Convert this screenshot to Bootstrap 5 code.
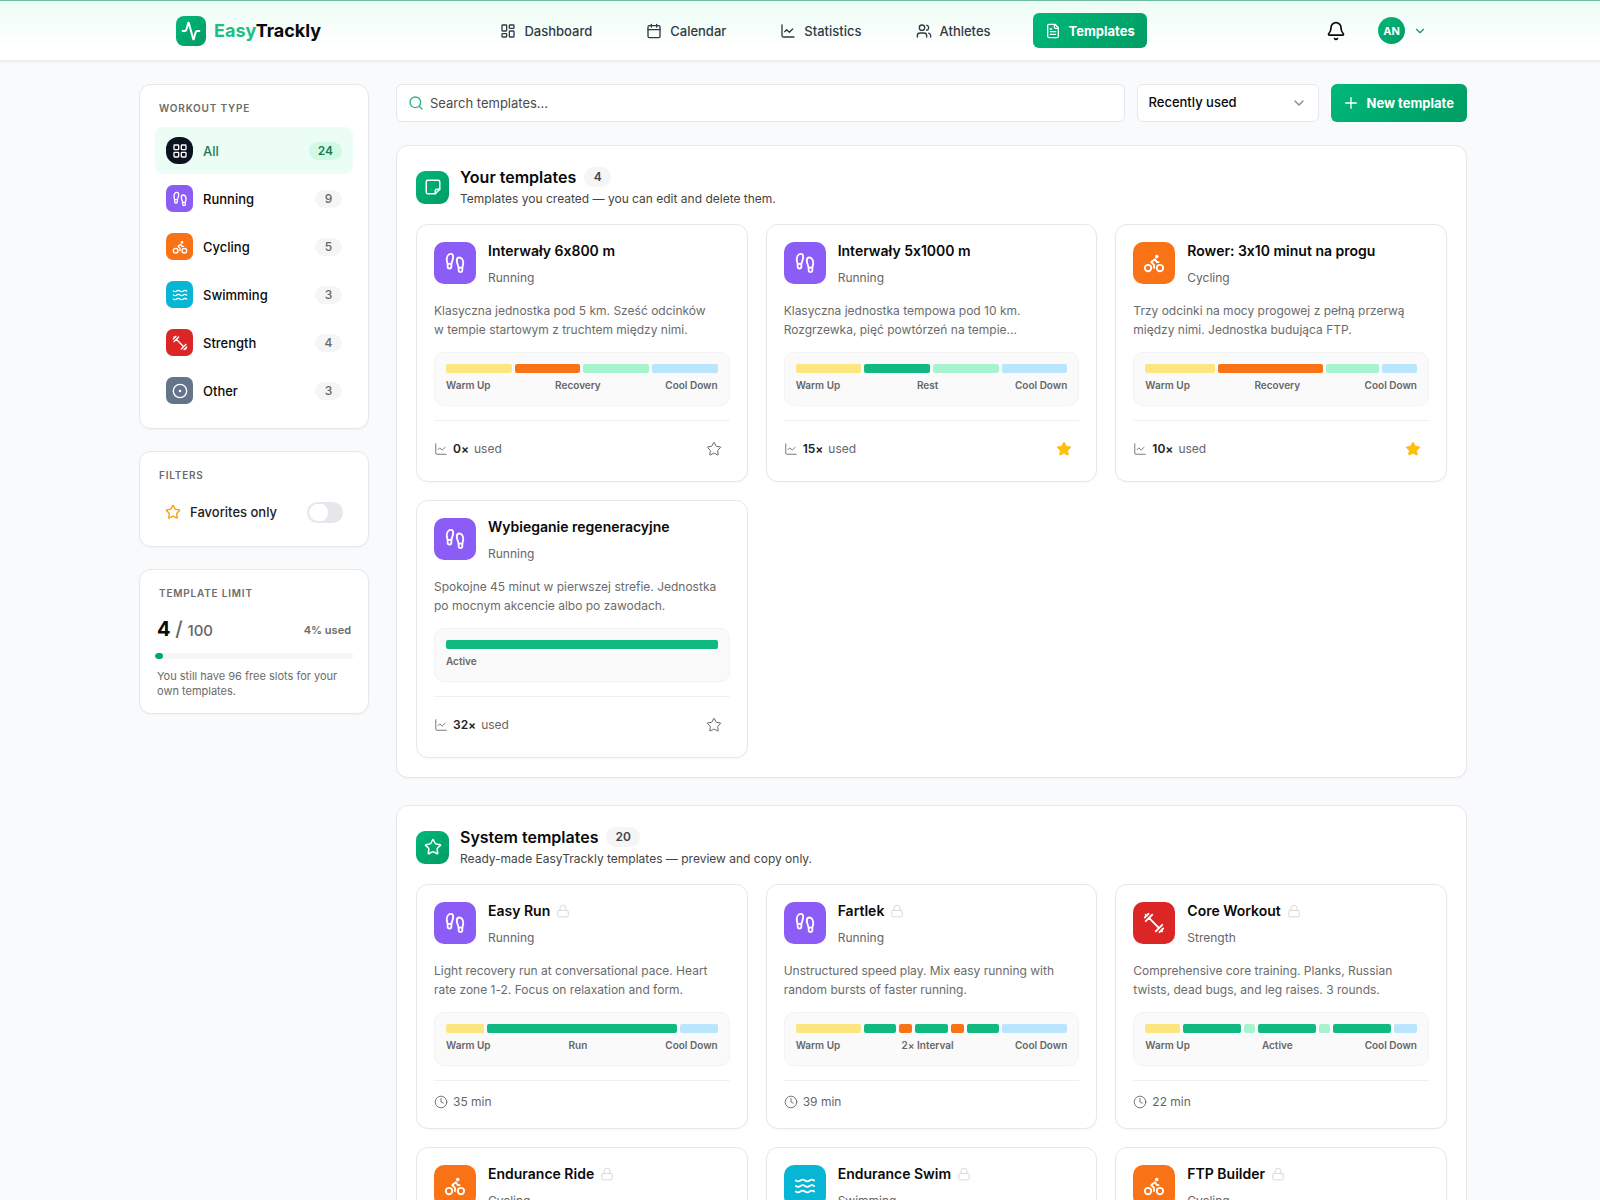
<!DOCTYPE html>
<html lang="en">
<head>
<meta charset="utf-8">
<meta name="viewport" content="width=device-width, initial-scale=1">
<title>EasyTrackly – Templates</title>
<link href="https://cdn.jsdelivr.net/npm/bootstrap@5.3.0/dist/css/bootstrap.min.css" rel="stylesheet">
<style>
  :root { --line: #e5e7eb; --green: #10b981; --ink: #0a0a0a; --muted: #6b6b6b; }
  body { font-family: Inter, "Liberation Sans", sans-serif; font-size: 13px; line-height: 20px; color: var(--ink); background: #f9fafb; font-feature-settings: "calt" 0; }
  svg.ico { width: 14px; height: 14px; fill: none; stroke: currentColor; stroke-width: 2; stroke-linecap: round; stroke-linejoin: round; flex: none; }
  svg.ico-16 { width: 16px; height: 16px; }
  svg.ico-18 { width: 18px; height: 18px; }
  svg.ico-20 { width: 20px; height: 20px; }
  .thin { stroke-width: 1.5 !important; }
  .green-fill { background: linear-gradient(135deg, #00b87a, #009c63); color: #fff; }

  .topbar { height: 61px; padding: 0; border-top: 1px solid #6fbf9f; border-bottom: 1px solid #e9eeec; background: linear-gradient(#ecfdf5, #fff 80%); box-shadow: 0 1px 3px rgba(0,0,0,.06); }
  .topbar-inner { max-width: 1272px; padding: 0 9px 0 12px; }
  .brand-mark { width: 30px; height: 30px; border-radius: 8px; }
  .brand-mark svg.ico { stroke-width: 2.4; }
  .brand-name { font-size: 18px; font-weight: 700; color: var(--ink); }
  .brand-name span { color: #1dbf83; }
  .main-nav { gap: 30px; }
  .main-nav .nav-link { display: flex; align-items: center; gap: 8px; height: 35px; padding: 0 12px; font-size: 13px; font-weight: 500; color: #2f3a44; border-radius: 6px; }
  .main-nav .nav-link.active { color: #fff; font-weight: 700; }
  .user-area { padding-left: 12px; gap: 32px; }
  .avatar { width: 27px; height: 27px; font-size: 11px; font-weight: 700; }
  .caret { color: #2c8a66; }
  .plain-btn { border: 0; background: none; padding: 0; color: var(--ink); }

  .page { max-width: 1334px; padding: 23px 0 30px 6px; gap: 27px; }
  .side { width: 230px; flex: none; display: flex; flex-direction: column; gap: 22px; }
  .panel { background: #fff; border: 1px solid var(--line); border-radius: 12px; box-shadow: 0 1px 2px rgba(0,0,0,.04); }
  .side .panel { padding: 14px 15px; }
  .side-title { font-size: 10px; line-height: 18px; font-weight: 600; letter-spacing: .08em; color: #6b6b6b; margin: 0; padding-left: 4px; text-transform: uppercase; }
  .types { margin-top: 10px; display: flex; flex-direction: column; gap: 1px; }
  .type-btn { display: flex; align-items: center; gap: 10px; width: 100%; height: 47px; padding: 0 11px; border: 0; background: none; border-radius: 8px; text-align: left; font-weight: 500; color: var(--ink); }
  .type-btn.active { background: #ecfdf5; color: #1b7a50; }
  .tile { width: 27px; height: 27px; border-radius: 7px; color: #fff; display: flex; align-items: center; justify-content: center; flex: none; }
  .t-all { background: #0b1220; border-radius: 12px; }
  .t-run { background: #8b5cf6; } .t-bike { background: #f97316; } .t-swim { background: #06b6d4; }
  .t-gym { background: #dc2626; } .t-other { background: #64748b; }
  .pill { min-width: 27px; padding: 0 9px; border-radius: 10px; background: #f5f5f5; color: #666; font-size: 12px; line-height: 18px; font-weight: 500; text-align: center; }
  .active .pill { background: #d1fae5; color: #1b7a50; font-weight: 600; }
  .fav-row { margin: 11px 0 3px; padding: 0 10px; height: 34px; gap: 9px; }
  .fav-star { color: #f59e0b; }
  .fav-row label { font-weight: 500; color: #222; }
  .fav-row .form-check-input { width: 36px; height: 21px; margin: 0; border: 2px solid #e5e7eb; background-color: #e5e7eb; background-size: 19px; --bs-form-switch-bg: url("data:image/svg+xml,%3csvg xmlns='http://www.w3.org/2000/svg' viewBox='-4 -4 8 8'%3e%3ccircle r='4' fill='%23fff'/%3e%3c/svg%3e"); }
  .limit-row { margin-top: 12px; padding: 0 2px; }
  .limit-num { font-size: 20px; line-height: 30px; font-weight: 700; }
  .limit-num span { font-weight: 500; color: #666; }
  .limit-num .limit-max { font-size: 15px; }
  .limit-bar { height: 6px; background: #f5f5f5; border-radius: 3px; margin-top: 7px; }
  .limit-bar .progress-bar { background: #00a86b; border-radius: 3px; }
  .note { font-size: 11px; line-height: 15px; color: #6b6b6b; }
  p.note { margin: 10px 0 0; padding: 0 2px; }

  .toolbar { gap: 12px; margin-bottom: 23px; }
  .tool { height: 38px; border: 1px solid var(--line); border-radius: 6px; background-color: #fff; font-size: 13px; }
  .search { display: flex; align-items: center; gap: 6px; padding: 0 11px; color: #2bb583; }
  .search input { border: 0; outline: 0; padding: 0; width: 100%; background: none; color: var(--ink); }
  .search input::placeholder { color: #4b4b4b; opacity: 1; }
  .sort { width: 182px; flex: none; font-weight: 500; color: var(--ink); padding: 0 34px 0 11px; background-image: url("data:image/svg+xml,%3csvg xmlns='http://www.w3.org/2000/svg' viewBox='0 0 24 24' fill='none' stroke='%23888' stroke-width='2' stroke-linecap='round' stroke-linejoin='round'%3e%3cpath d='m6 9 6 6 6-6'/%3e%3c/svg%3e"); background-position: right 11px center; background-size: 16px; }
  .new-btn { height: 38px; padding: 0 13px 0 12px; border: 0; border-radius: 6px; font-size: 13px; font-weight: 700; white-space: nowrap; display: flex; align-items: center; gap: 8px; }

  .block { padding: 19px; }
  .block + .block { margin-top: 27px; }
  .block-head { height: 44px; margin-bottom: 15px; display: flex; align-items: center; gap: 11px; }
  .block-icon { width: 33px; height: 33px; border-radius: 9px; display: flex; align-items: center; justify-content: center; }
  .block-head h2 { font-size: 16px; line-height: 24px; font-weight: 600; margin: 0; }
  .block-head p { font-size: 12px; line-height: 20px; margin: 0; color: #444; }
  .block-head .pill { line-height: 20px; font-weight: 600; color: #444; }
  .tpl-grid { display: grid; grid-template-columns: repeat(3, minmax(0, 1fr)); gap: 18px; }
  .tpl { background: #fff; border: 1px solid var(--line); border-radius: 12px; padding: 17px; box-shadow: 0 1px 2px rgba(0,0,0,.03); }
  .tpl-top { display: flex; gap: 12px; height: 42px; }
  .tpl-top .tile { width: 42px; height: 42px; border-radius: 10px; }
  .tpl-top .tile .ico { width: 22px; height: 22px; }
  .tpl h3 { font-size: 14px; line-height: 18px; font-weight: 600; margin: 0 0 9px; display: flex; align-items: center; gap: 6px; }
  .tpl h3 .ico { color: #d4d4d4; }
  .kind { font-size: 12px; line-height: 18px; color: #666; }
  .desc { font-size: 12px; line-height: 19px; min-height: 38px; margin: 17px 0 13px; color: #6b6b6b; }
  .plan { height: 54px; border: 1px solid #f3f3f3; border-radius: 10px; background: #fafafa; padding: 11px; }
  .segs { display: flex; gap: 3px; height: 9px; }
  .segs i { border-radius: 2px; min-width: 0; }
  .s-w { background: #fde680; } .s-o { background: #f97316; } .s-r { background: #a7f3d0; } .s-c { background: #bae6fd; } .s-g { background: #10b981; }
  .caps { display: flex; justify-content: space-between; font-size: 10px; line-height: 16px; margin-top: 4px; font-weight: 600; color: #666; }
  .tpl-foot { display: flex; align-items: center; gap: 5px; margin: 14px 0 -12px; border-top: 1px solid #f0f0f0; font-size: 12px; color: #666; }
  .own .tpl-foot { height: 57px; }
  .sys .tpl-foot { height: 43px; }
  .own .tpl { padding-bottom: 16px; }
  .tpl-foot b { color: #222; font-weight: 600; }
  .star-btn { width: 31px; height: 31px; color: #666; display: flex; align-items: center; justify-content: center; }
  .star-btn.on { color: #fbb724; } .star-btn.on .ico { fill: #ffc107; }
</style>
<script src="https://cdn.jsdelivr.net/npm/bootstrap@5.3.0/dist/js/bootstrap.bundle.min.js"></script>
</head>
<body>
<svg class="d-none" xmlns="http://www.w3.org/2000/svg">
  <symbol id="pulse" viewBox="0 0 24 24"><path d="M22 12h-2.48a2 2 0 0 0-1.93 1.46l-2.35 8.36a.25.25 0 0 1-.48 0L9.24 2.18a.25.25 0 0 0-.48 0l-2.35 8.36A2 2 0 0 1 4.49 12H2"/></symbol>
  <symbol id="dash" viewBox="0 0 24 24"><rect x="3" y="3" width="7" height="9" rx="1"/><rect x="14" y="3" width="7" height="5" rx="1"/><rect x="14" y="12" width="7" height="9" rx="1"/><rect x="3" y="16" width="7" height="5" rx="1"/></symbol>
  <symbol id="cal" viewBox="0 0 24 24"><path d="M8 2v4M16 2v4M3 10h18"/><rect x="3" y="4" width="18" height="18" rx="2"/></symbol>
  <symbol id="chart" viewBox="0 0 24 24"><path d="M3 3v16a2 2 0 0 0 2 2h16"/><path d="m19 9-5 5-4-4-3 3"/></symbol>
  <symbol id="users" viewBox="0 0 24 24"><path d="M16 21v-2a4 4 0 0 0-4-4H6a4 4 0 0 0-4 4v2"/><circle cx="9" cy="7" r="4"/><path d="M22 21v-2a4 4 0 0 0-3-3.87M16 3.13a4 4 0 0 1 0 7.75"/></symbol>
  <symbol id="file" viewBox="0 0 24 24"><path d="M15 2H6a2 2 0 0 0-2 2v16a2 2 0 0 0 2 2h12a2 2 0 0 0 2-2V7Z"/><path d="M14 2v4a2 2 0 0 0 2 2h4M10 9H8M16 13H8M16 17H8"/></symbol>
  <symbol id="bell" viewBox="0 0 24 24"><path d="M10.268 21a2 2 0 0 0 3.464 0"/><path d="M3.262 15.326A1 1 0 0 0 4 17h16a1 1 0 0 0 .74-1.673C19.41 13.956 18 12.499 18 8A6 6 0 0 0 6 8c0 4.499-1.411 5.956-2.738 7.326"/></symbol>
  <symbol id="down" viewBox="0 0 24 24"><path d="m6 9 6 6 6-6"/></symbol>
  <symbol id="find" viewBox="0 0 24 24"><circle cx="11" cy="11" r="8"/><path d="m21 21-4.3-4.3"/></symbol>
  <symbol id="plus" viewBox="0 0 24 24"><path d="M4 12h16M12 4v16"/></symbol>
  <symbol id="grid" viewBox="0 0 24 24"><rect x="3" y="3" width="7" height="7" rx="1"/><rect x="14" y="3" width="7" height="7" rx="1"/><rect x="14" y="14" width="7" height="7" rx="1"/><rect x="3" y="14" width="7" height="7" rx="1"/></symbol>
  <symbol id="run" viewBox="0 0 24 24"><path d="M4 16v-2.38C4 11.5 2.97 10.5 3 8c.03-2.72 1.49-6 4.5-6C9.37 2 10 3.8 10 5.5c0 3.11-2 5.66-2 8.68V16a2 2 0 1 1-4 0Z"/><path d="M20 20v-2.38c0-2.12 1.03-3.12 1-5.62-.03-2.72-1.49-6-4.5-6C14.63 6 14 7.8 14 9.5c0 3.11 2 5.66 2 8.68V20a2 2 0 1 0 4 0Z"/><path d="M16 17h4M4 13h4"/></symbol>
  <symbol id="bike" viewBox="0 0 24 24"><circle cx="18.5" cy="17.5" r="3.5"/><circle cx="5.5" cy="17.5" r="3.5"/><circle cx="15" cy="5" r="1"/><path d="M12 17.5V14l-3-3 4-3 2 3h2"/></symbol>
  <symbol id="swim" viewBox="0 0 24 24"><path d="M2 6c.6.5 1.2 1 2.5 1C7 7 7 5 9.5 5c2.6 0 2.4 2 5 2 2.5 0 2.5-2 5-2 1.3 0 1.9.5 2.5 1"/><path d="M2 12c.6.5 1.2 1 2.5 1 2.5 0 2.5-2 5-2 2.6 0 2.4 2 5 2 2.5 0 2.5-2 5-2 1.3 0 1.9.5 2.5 1"/><path d="M2 18c.6.5 1.2 1 2.5 1 2.5 0 2.5-2 5-2 2.6 0 2.4 2 5 2 2.5 0 2.5-2 5-2 1.3 0 1.9.5 2.5 1"/></symbol>
  <symbol id="gym" viewBox="0 0 24 24"><path d="m6.5 6.5 11 11M21 21l-1-1M3 3l1 1M18 22l4-4M2 6l4-4M3 10l7-7M14 21l7-7"/></symbol>
  <symbol id="dot" viewBox="0 0 24 24"><circle cx="12" cy="12" r="10"/><circle cx="12" cy="12" r="1"/></symbol>
  <symbol id="star" viewBox="0 0 24 24"><path d="M11.525 2.295a.53.53 0 0 1 .95 0l2.31 4.679a2.123 2.123 0 0 0 1.595 1.16l5.166.756a.53.53 0 0 1 .294.904l-3.736 3.638a2.123 2.123 0 0 0-.611 1.878l.882 5.14a.53.53 0 0 1-.771.56l-4.618-2.428a2.122 2.122 0 0 0-1.973 0L6.396 21.01a.53.53 0 0 1-.77-.56l.881-5.139a2.122 2.122 0 0 0-.611-1.879L2.16 9.795a.53.53 0 0 1 .294-.906l5.165-.755a2.122 2.122 0 0 0 1.597-1.16z"/></symbol>
  <symbol id="note" viewBox="0 0 24 24"><path d="M15 21H5a2 2 0 0 1-2-2V5a2 2 0 0 1 2-2h14a2 2 0 0 1 2 2v10Z"/><path d="M15 21v-4a2 2 0 0 1 2-2h4"/></symbol>
  <symbol id="lock" viewBox="0 0 24 24"><rect x="3" y="11" width="18" height="11" rx="2"/><path d="M7 11V7a5 5 0 0 1 10 0v4"/></symbol>
  <symbol id="clock" viewBox="0 0 24 24"><circle cx="12" cy="12" r="10"/><path d="M12 6v6l4 2"/></symbol>
</svg>

<header class="topbar navbar">
  <div class="topbar-inner container-fluid mx-auto">
    <a href="#" class="d-flex align-items-center gap-2 text-decoration-none">
      <span class="brand-mark green-fill d-flex align-items-center justify-content-center"><svg class="ico ico-20"><use href="#pulse"/></svg></span>
      <span class="brand-name"><span>Easy</span>Trackly</span>
    </a>
    <nav class="main-nav nav flex-nowrap">
      <a class="nav-link" href="#"><svg class="ico ico-16"><use href="#dash"/></svg>Dashboard</a>
      <a class="nav-link" href="#"><svg class="ico ico-16"><use href="#cal"/></svg>Calendar</a>
      <a class="nav-link" href="#"><svg class="ico ico-16"><use href="#chart"/></svg>Statistics</a>
      <a class="nav-link" href="#"><svg class="ico ico-16"><use href="#users"/></svg>Athletes</a>
      <a class="nav-link active green-fill" href="#" aria-current="page"><svg class="ico ico-16"><use href="#file"/></svg>Templates</a>
    </nav>
    <div class="user-area d-flex align-items-center">
      <button class="plain-btn d-flex" aria-label="Notifications"><svg class="ico ico-20"><use href="#bell"/></svg></button>
      <button class="plain-btn d-flex align-items-center gap-2" aria-label="Account">
        <span class="avatar green-fill rounded-circle d-flex align-items-center justify-content-center">AN</span>
        <svg class="ico caret"><use href="#down"/></svg>
      </button>
    </div>
  </div>
</header>

<div class="page d-flex align-items-start mx-auto">
  <aside class="side">
    <section class="panel">
      <h2 class="side-title">Workout type</h2>
      <div class="types">
        <button class="type-btn active"><span class="tile t-all"><svg class="ico ico-16"><use href="#grid"/></svg></span>All<span class="pill ms-auto">24</span></button>
        <button class="type-btn"><span class="tile t-run"><svg class="ico ico-16"><use href="#run"/></svg></span>Running<span class="pill ms-auto">9</span></button>
        <button class="type-btn"><span class="tile t-bike"><svg class="ico ico-16"><use href="#bike"/></svg></span>Cycling<span class="pill ms-auto">5</span></button>
        <button class="type-btn"><span class="tile t-swim"><svg class="ico ico-16"><use href="#swim"/></svg></span>Swimming<span class="pill ms-auto">3</span></button>
        <button class="type-btn"><span class="tile t-gym"><svg class="ico ico-16"><use href="#gym"/></svg></span>Strength<span class="pill ms-auto">4</span></button>
        <button class="type-btn"><span class="tile t-other"><svg class="ico ico-16"><use href="#dot"/></svg></span>Other<span class="pill ms-auto">3</span></button>
      </div>
    </section>
    <section class="panel">
      <h2 class="side-title">Filters</h2>
      <div class="fav-row form-switch d-flex align-items-center">
        <svg class="ico ico-16 fav-star"><use href="#star"/></svg>
        <label for="fav">Favorites only</label>
        <input class="form-check-input ms-auto" type="checkbox" role="switch" id="fav">
      </div>
    </section>
    <section class="panel">
      <h2 class="side-title">Template limit</h2>
      <div class="limit-row d-flex align-items-center justify-content-between">
        <div class="limit-num">4 <span>/</span> <span class="limit-max">100</span></div>
        <div class="note fw-semibold">4% used</div>
      </div>
      <div class="progress limit-bar" role="progressbar" aria-valuenow="4" aria-valuemin="0" aria-valuemax="100" aria-label="Template limit"><div class="progress-bar" style="width:4%"></div></div>
      <p class="note">You still have 96 free slots for your own templates.</p>
    </section>
  </aside>

  <main class="flex-grow-1">
    <div class="toolbar d-flex">
      <label class="tool search flex-grow-1"><svg class="ico ico-16"><use href="#find"/></svg><input type="search" placeholder="Search templates..." aria-label="Search templates"></label>
      <select class="form-select tool sort" aria-label="Sort"><option>Recently used</option><option>Name</option></select>
      <button class="new-btn green-fill"><svg class="ico ico-16"><use href="#plus"/></svg>New template</button>
    </div>

    <section class="panel block own">
      <div class="block-head">
        <span class="block-icon green-fill"><svg class="ico ico-18"><use href="#note"/></svg></span>
        <div><div class="d-flex align-items-center gap-2"><h2>Your templates</h2><span class="pill">4</span></div><p>Templates you created — you can edit and delete them.</p></div>
      </div>
      <div class="tpl-grid">
        <article class="tpl">
          <div class="tpl-top"><span class="tile t-run"><svg class="ico"><use href="#run"/></svg></span><div><h3>Interwały 6x800 m</h3><div class="kind">Running</div></div></div>
          <p class="desc">Klasyczna jednostka pod 5 km. Sześć odcinków<br>w tempie startowym z truchtem między nimi.</p>
          <div class="plan"><div class="segs"><i class="s-w" style="flex:1"></i><i class="s-o" style="flex:1"></i><i class="s-r" style="flex:1"></i><i class="s-c" style="flex:1"></i></div><div class="caps"><span>Warm Up</span><span>Recovery</span><span>Cool Down</span></div></div>
          <div class="tpl-foot"><svg class="ico thin"><use href="#chart"/></svg><b>0×</b><span>used</span><button class="plain-btn star-btn ms-auto" aria-label="Add to favorites"><svg class="ico ico-16 thin"><use href="#star"/></svg></button></div>
        </article>
        <article class="tpl">
          <div class="tpl-top"><span class="tile t-run"><svg class="ico"><use href="#run"/></svg></span><div><h3>Interwały 5x1000 m</h3><div class="kind">Running</div></div></div>
          <p class="desc">Klasyczna jednostka tempowa pod 10 km.<br>Rozgrzewka, pięć powtórzeń na tempie...</p>
          <div class="plan"><div class="segs"><i class="s-w" style="flex:1"></i><i class="s-g" style="flex:1"></i><i class="s-r" style="flex:1"></i><i class="s-c" style="flex:1"></i></div><div class="caps"><span>Warm Up</span><span>Rest</span><span>Cool Down</span></div></div>
          <div class="tpl-foot"><svg class="ico thin"><use href="#chart"/></svg><b>15×</b><span>used</span><button class="plain-btn star-btn on ms-auto" aria-label="Remove from favorites"><svg class="ico ico-16 thin"><use href="#star"/></svg></button></div>
        </article>
        <article class="tpl">
          <div class="tpl-top"><span class="tile t-bike"><svg class="ico"><use href="#bike"/></svg></span><div><h3>Rower: 3x10 minut na progu</h3><div class="kind">Cycling</div></div></div>
          <p class="desc">Trzy odcinki na mocy progowej z pełną przerwą<br>między nimi. Jednostka budująca FTP.</p>
          <div class="plan"><div class="segs"><i class="s-w" style="flex:20"></i><i class="s-o" style="flex:30"></i><i class="s-r" style="flex:15"></i><i class="s-c" style="flex:10"></i></div><div class="caps"><span>Warm Up</span><span>Recovery</span><span>Cool Down</span></div></div>
          <div class="tpl-foot"><svg class="ico thin"><use href="#chart"/></svg><b>10×</b><span>used</span><button class="plain-btn star-btn on ms-auto" aria-label="Remove from favorites"><svg class="ico ico-16 thin"><use href="#star"/></svg></button></div>
        </article>
        <article class="tpl">
          <div class="tpl-top"><span class="tile t-run"><svg class="ico"><use href="#run"/></svg></span><div><h3>Wybieganie regeneracyjne</h3><div class="kind">Running</div></div></div>
          <p class="desc">Spokojne 45 minut w pierwszej strefie. Jednostka<br>po mocnym akcencie albo po zawodach.</p>
          <div class="plan"><div class="segs"><i class="s-g" style="flex:1"></i></div><div class="caps"><span>Active</span></div></div>
          <div class="tpl-foot"><svg class="ico thin"><use href="#chart"/></svg><b>32×</b><span>used</span><button class="plain-btn star-btn ms-auto" aria-label="Add to favorites"><svg class="ico ico-16 thin"><use href="#star"/></svg></button></div>
        </article>
      </div>
    </section>

    <section class="panel block sys">
      <div class="block-head">
        <span class="block-icon green-fill"><svg class="ico ico-18"><use href="#star"/></svg></span>
        <div><div class="d-flex align-items-center gap-2"><h2>System templates</h2><span class="pill">20</span></div><p>Ready-made EasyTrackly templates — preview and copy only.</p></div>
      </div>
      <div class="tpl-grid">
        <article class="tpl">
          <div class="tpl-top"><span class="tile t-run"><svg class="ico"><use href="#run"/></svg></span><div><h3>Easy Run<svg class="ico thin"><use href="#lock"/></svg></h3><div class="kind">Running</div></div></div>
          <p class="desc">Light recovery run at conversational pace. Heart<br>rate zone 1-2. Focus on relaxation and form.</p>
          <div class="plan"><div class="segs"><i class="s-w" style="flex:5"></i><i class="s-g" style="flex:25"></i><i class="s-c" style="flex:5"></i></div><div class="caps"><span>Warm Up</span><span>Run</span><span>Cool Down</span></div></div>
          <div class="tpl-foot"><svg class="ico thin"><use href="#clock"/></svg><span>35 min</span></div>
        </article>
        <article class="tpl">
          <div class="tpl-top"><span class="tile t-run"><svg class="ico"><use href="#run"/></svg></span><div><h3>Fartlek<svg class="ico thin"><use href="#lock"/></svg></h3><div class="kind">Running</div></div></div>
          <p class="desc">Unstructured speed play. Mix easy running with<br>random bursts of faster running.</p>
          <div class="plan"><div class="segs"><i class="s-w" style="flex:10"></i><i class="s-g" style="flex:5"></i><i class="s-o" style="flex:2"></i><i class="s-g" style="flex:5"></i><i class="s-o" style="flex:2"></i><i class="s-g" style="flex:5"></i><i class="s-c" style="flex:10"></i></div><div class="caps"><span>Warm Up</span><span>2× Interval</span><span>Cool Down</span></div></div>
          <div class="tpl-foot"><svg class="ico thin"><use href="#clock"/></svg><span>39 min</span></div>
        </article>
        <article class="tpl">
          <div class="tpl-top"><span class="tile t-gym"><svg class="ico"><use href="#gym"/></svg></span><div><h3>Core Workout<svg class="ico thin"><use href="#lock"/></svg></h3><div class="kind">Strength</div></div></div>
          <p class="desc">Comprehensive core training. Planks, Russian<br>twists, dead bugs, and leg raises. 3 rounds.</p>
          <div class="plan"><div class="segs"><i class="s-w" style="flex:3"></i><i class="s-g" style="flex:5"></i><i class="s-r" style="flex:1"></i><i class="s-g" style="flex:5"></i><i class="s-r" style="flex:1"></i><i class="s-g" style="flex:5"></i><i class="s-c" style="flex:2"></i></div><div class="caps"><span>Warm Up</span><span>Active</span><span>Cool Down</span></div></div>
          <div class="tpl-foot"><svg class="ico thin"><use href="#clock"/></svg><span>22 min</span></div>
        </article>
        <article class="tpl">
          <div class="tpl-top"><span class="tile t-bike"><svg class="ico"><use href="#bike"/></svg></span><div><h3>Endurance Ride<svg class="ico thin"><use href="#lock"/></svg></h3><div class="kind">Cycling</div></div></div>
        </article>
        <article class="tpl">
          <div class="tpl-top"><span class="tile t-swim"><svg class="ico"><use href="#swim"/></svg></span><div><h3>Endurance Swim<svg class="ico thin"><use href="#lock"/></svg></h3><div class="kind">Swimming</div></div></div>
        </article>
        <article class="tpl">
          <div class="tpl-top"><span class="tile t-bike"><svg class="ico"><use href="#bike"/></svg></span><div><h3>FTP Builder<svg class="ico thin"><use href="#lock"/></svg></h3><div class="kind">Cycling</div></div></div>
        </article>
      </div>
    </section>
  </main>
</div>
</body>
</html>
